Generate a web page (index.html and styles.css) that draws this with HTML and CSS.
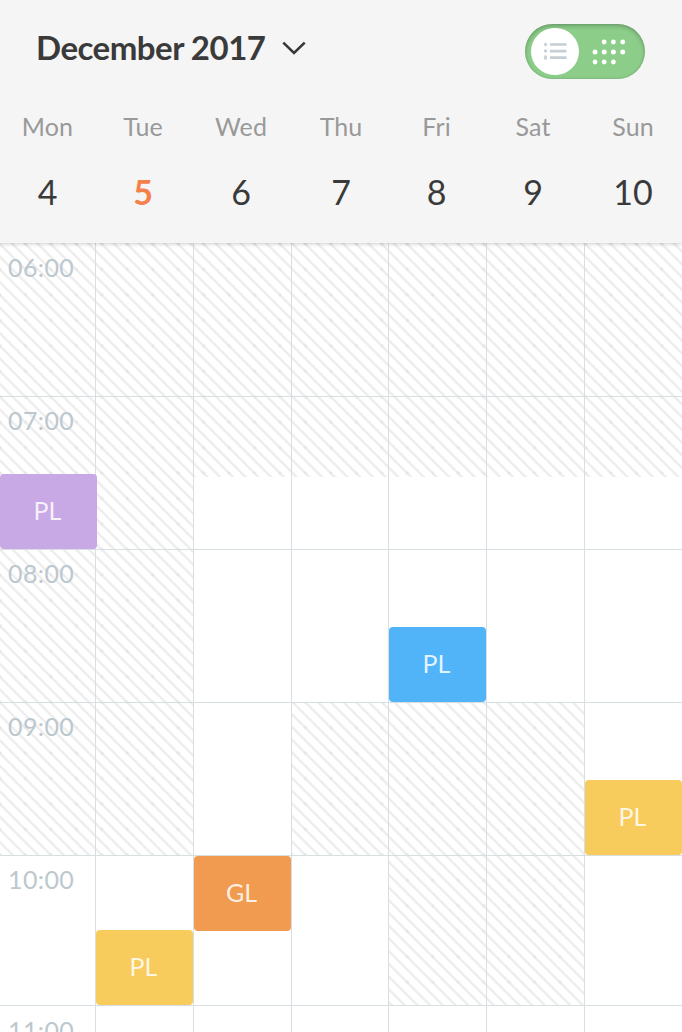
FILE: index.html
```
<!DOCTYPE html>
<html lang="en">
<head>
<meta charset="utf-8">
<title>Week calendar</title>
<link rel="stylesheet" href="styles.css">
</head>
<body>
<div class="calendar">
  <header class="header">
    <div class="toolbar">
      <div class="month"><h1 class="title">December 2017</h1>
        <svg class="chevron" width="26" height="18" viewBox="0 0 26 18"><path d="M2.3 3.6 13 14 23.7 3.6" fill="none" stroke="#383838" stroke-width="2.6"/></svg>
      </div>
      <div class="toggle">
        <div class="knob">
          <svg width="24" height="18" viewBox="0 0 24 18"><g fill="#c5ced4"><path d="M2.5 0.5 4.5 2.5 2.5 4.5 0.5 2.5ZM2.5 7 4.5 9 2.5 11 0.5 9ZM1.2 13.5h2.6v4H1.2Z"/><path d="M7 1.2h16.5v2.6H7ZM7 7.8h16.5v2.6H7ZM7 14.2h16.5v2.8H7Z"/></g></svg>
        </div>
        <svg class="dots" width="34" height="26" viewBox="0 0 34 26"><g fill="#fff"><circle cx="12.2" cy="3" r="2.4"/><circle cx="21.4" cy="3" r="2.4"/><circle cx="30.7" cy="3" r="2.4"/><circle cx="3" cy="13" r="2.5"/><circle cx="12.2" cy="13" r="2.5"/><circle cx="21.4" cy="13" r="2.5"/><circle cx="30.7" cy="13" r="2.5"/><circle cx="3" cy="23" r="2.4"/><circle cx="12.2" cy="23" r="2.4"/><circle cx="21.4" cy="23" r="2.4"/></g></svg>
      </div>
    </div>
    <div class="days">
      <div class="day"><span class="name">Mon</span><span class="num">4</span></div>
      <div class="day today"><span class="name">Tue</span><span class="num">5</span></div>
      <div class="day wed"><span class="name">Wed</span><span class="num">6</span></div>
      <div class="day thu"><span class="name">Thu</span><span class="num">7</span></div>
      <div class="day fri"><span class="name">Fri</span><span class="num">8</span></div>
      <div class="day sat"><span class="name">Sat</span><span class="num">9</span></div>
      <div class="day"><span class="name">Sun</span><span class="num">10</span></div>
    </div>
  </header>
  <main class="grid">
    <div class="cell"><span class="time">06:00</span></div><div class="cell"></div><div class="cell"></div><div class="cell"></div><div class="cell"></div><div class="cell"></div><div class="cell"></div>

    <div class="cell"><span class="time">07:00</span><div class="event purple">PL</div></div><div class="cell"></div><div class="cell half"></div><div class="cell half"></div><div class="cell half"></div><div class="cell half"></div><div class="cell half"></div>

    <div class="cell"><span class="time">08:00</span></div><div class="cell"></div><div class="cell open"></div><div class="cell open"></div><div class="cell open"><div class="event blue">PL</div></div><div class="cell open"></div><div class="cell open"></div>

    <div class="cell"><span class="time">09:00</span></div><div class="cell"></div><div class="cell open"></div><div class="cell"></div><div class="cell"></div><div class="cell"></div><div class="cell open"><div class="event yellow">PL</div></div>

    <div class="cell open"><span class="time">10:00</span></div><div class="cell open"><div class="event yellow">PL</div></div><div class="cell open"><div class="event orange">GL</div></div><div class="cell open"></div><div class="cell"></div><div class="cell"></div><div class="cell open"></div>

    <div class="cell open"><span class="time">11:00</span></div><div class="cell open"></div><div class="cell open"></div><div class="cell open"></div><div class="cell open"></div><div class="cell open"></div><div class="cell open"></div>
  </main>
</div>
</body>
</html>
```
FILE: styles.css
```
* { box-sizing: border-box; }
body { margin: 0; background: #fff; font-family: Lato, "Open Sans", sans-serif; }
.calendar { width: 682px; height: 1032px; overflow: hidden; display: flex; flex-direction: column; }
.header { height: 243px; flex: none; background: #f5f5f5; box-shadow: 0 1px 4px rgba(0,0,0,.2); z-index: 1; }
.toolbar { height: 104px; display: flex; justify-content: space-between; align-items: flex-start; padding: 24px 37px 0 36px; }
.month { display: flex; align-items: center; height: 48px; gap: 16px; }
.title { margin: -2px 0 0; font-size: 33px; line-height: 48px; font-weight: 700; letter-spacing: -.5px; color: #3a3a3a; white-space: nowrap; }
.chevron { display: block; }
.toggle { width: 120px; height: 54.5px; border-radius: 28px; background: #8bcd89; display: flex; align-items: center; padding-left: 6px; gap: 13px; box-shadow: inset 0 2px 4px rgba(0,0,0,.22), inset 0 0 2px rgba(0,0,0,.15); }
.knob { width: 47.5px; height: 47.5px; border-radius: 50%; background: #fff; display: flex; align-items: center; justify-content: center; }
.dots { display: block; margin-top: 2px; }
.days, .grid { display: grid; grid-template-columns: 96px 98px 98px 97px 98px 98px 97px; }
.day { display: flex; flex-direction: column; align-items: center; padding-right: 1px; }
.day.today, .day.wed { padding-right: 4px; }
.day.thu { padding-left: 1px; padding-right: 0; }
.day.fri { padding-right: 3px; }
.day.sat { padding-right: 6px; }
.name { font-size: 25px; line-height: 44px; color: #999; letter-spacing: .1px; }
.num { font-size: 34px; line-height: 44px; margin-top: 22px; color: #3a3a3a; }
.today .num { color: #f4804b; font-weight: 700; }
.grid {
  height: 789px; flex: none; grid-template-rows: 154px 153px 153px 153px 150px 26px;
  background:
    radial-gradient(circle, #e2e2e2 0, rgba(226,226,226,0) 2.2px) -12.65px 13.7px / 25.456px 25.456px,
    repeating-linear-gradient(45deg, #f2f2f2 0, #fff 1px, #fff 6.3px, #ebebeb 7.7px, #ebebeb 8.1px, #f2f2f2 9px);
}
.cell { position: relative; display: flex; align-items: flex-end; border-right: 1px solid #d8dfe2; border-bottom: 1px solid #d8dfe2; min-width: 0; min-height: 0; }
.cell:nth-child(7n) { border-right: 0; }
.cell:nth-last-child(-n+7) { border-bottom: 0; }
.open { background: #fff; }
.half { background: linear-gradient(transparent 80px, #fff 80px); }
.time { position: absolute; left: 8px; top: 7px; font-size: 25px; line-height: 32px; letter-spacing: .4px; color: #bcc8ce; }
.cell:first-child .time, .cell:nth-last-child(-n+7) .time { top: 8px; }
.event { flex: none; width: 100%; height: 75px; padding: 0 2px 4px 0; border-radius: 4px; display: flex; align-items: center; justify-content: center; font-size: 25px; color: rgba(255,255,255,.85); }
.purple { width: 97px; background: #c8a8e5; }
.blue { background: #51b4f9; }
.yellow { background: #f7cb5c; }
.orange { background: #f19b50; align-self: flex-start; }
```
